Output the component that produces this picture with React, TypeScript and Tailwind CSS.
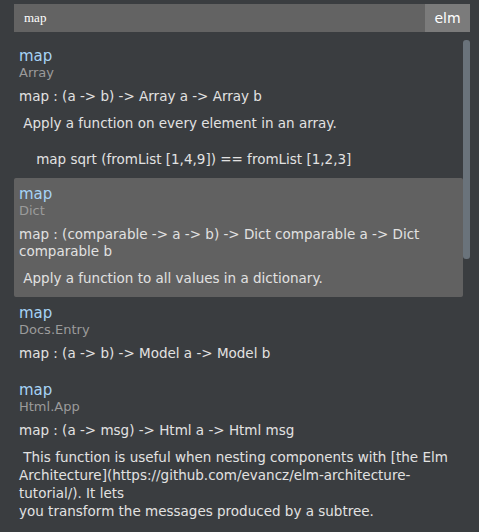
import React from 'react';

type Entry = {
  name: string;
  module: string;
  signature: string;
  doc?: string;
  selected?: boolean;
};

const entries: Entry[] = [
  {
    name: 'map',
    module: 'Array',
    signature: 'map : (a -> b) -> Array a -> Array b',
    doc: ' Apply a function on every element in an array.\n\n    map sqrt (fromList [1,4,9]) == fromList [1,2,3]',
  },
  {
    name: 'map',
    module: 'Dict',
    signature: 'map : (comparable -> a -> b) -> Dict comparable a -> Dict comparable b',
    doc: ' Apply a function to all values in a dictionary.',
    selected: true,
  },
  {
    name: 'map',
    module: 'Docs.Entry',
    signature: 'map : (a -> b) -> Model a -> Model b',
  },
  {
    name: 'map',
    module: 'Html.App',
    signature: 'map : (a -> msg) -> Html a -> Html msg',
    doc: ' This function is useful when nesting components with [the Elm Architecture](https://github.com/evancz/elm-architecture-tutorial/). It lets\nyou transform the messages produced by a subtree.',
  },
];

const font = { fontFamily: '"DejaVu Sans", Verdana, sans-serif' };

const App: React.FC = () => {
  return (
    <div className="w-[479px] h-[532px] overflow-hidden bg-[#3a3d40] relative" style={font}>
      {/* 検索バー */}
      <div className="pt-[4px] pl-[14px] pr-[9px]">
        <div className="flex h-[28px] bg-[#636363]">
          <div
            className="flex-1 flex items-center pl-[10px] text-[13px] text-white"
            style={{ fontFamily: '"Liberation Serif", "DejaVu Serif", serif' }}
          >
            map
          </div>
          <div className="w-[45px] flex items-center justify-center bg-[#7b7b7b] text-[14px] text-white">
            elm
          </div>
        </div>
      </div>

      {/* 候補リスト */}
      <div className="pt-[8px] pl-[14px] pr-[16px]">
        {entries.map((entry, i) => (
          <div
            key={i}
            className={`px-[5px] pt-[8px] rounded-[2px] ${entry.doc ? 'pb-[10px]' : 'pb-[12px]'} ${entry.selected ? 'bg-[#616161]' : ''}`}
          >
            <div className="text-[15px] leading-[17px] text-[#a6d3f6]">{entry.name}</div>
            <div className="text-[13px] leading-[15px] text-[#9b9b9b]">{entry.module}</div>
            <div className="mt-[8px] text-[13.5px] leading-[17px] text-[#e2e2e2]">{entry.signature}</div>
            {entry.doc && (
              <div className="mt-[9px] text-[13.5px] leading-[18px] text-[#e2e2e2] whitespace-pre-wrap">
                {entry.doc}
              </div>
            )}
          </div>
        ))}
      </div>

      {/* スクロールバー */}
      <div className="absolute left-[463px] top-[40px] w-[7px] h-[219px] rounded-[3px] bg-[#6a737b]" />
    </div>
  );
};

export default App;
